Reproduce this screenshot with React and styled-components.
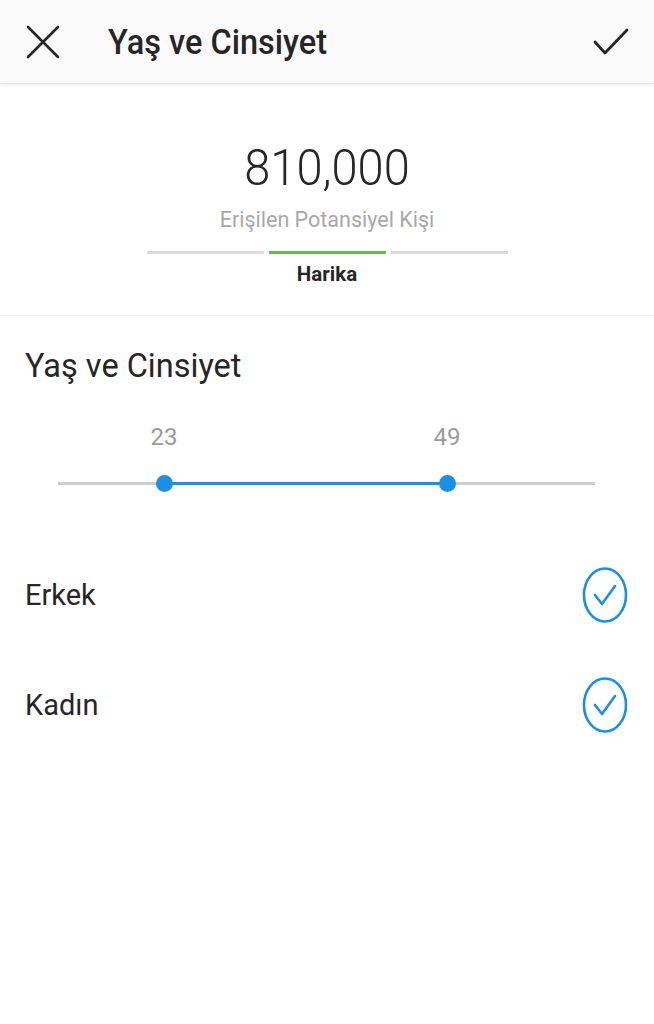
import styled, { createGlobalStyle } from "styled-components";

const GlobalStyle = createGlobalStyle`
  html, body {
    margin: 0;
    padding: 0;
    background: #ffffff;
    font-family: Roboto, "Noto Sans", sans-serif;
    color: #262626;
  }
`;

const Page = styled.div`
  width: 654px;
  height: 1024px;
  background: #ffffff;
  display: flex;
  flex-direction: column;
`;

const Header = styled.div`
  height: 84px;
  background: #fafafa;
  border-bottom: 1px solid #e6e6e6;
  box-shadow: 0 2px 2px rgba(0, 0, 0, 0.06);
  display: flex;
  align-items: center;
  padding: 0 25px 0 25px;
  box-sizing: border-box;
`;

const IconButton = styled.div`
  width: 36px;
  height: 36px;
  display: flex;
  align-items: center;
  justify-content: center;
`;

const HeaderTitle = styled.h1`
  flex: 1;
  margin: 0 0 0 47px;
  font-size: 32.5px;
  font-weight: 500;
  color: #262626;
  transform: scaleY(1.06);
`;

const Summary = styled.div`
  display: flex;
  flex-direction: column;
  align-items: center;
  padding-top: 58px;
  height: 232px;
  box-sizing: border-box;
  border-bottom: 1px solid #efefef;
`;

const BigNumber = styled.div`
  font-size: 47px;
  font-weight: 300;
  line-height: 52px;
  color: #262626;
  transform: scaleY(1.06);
`;

const Caption = styled.div`
  margin-top: 13px;
  font-size: 21.5px;
  color: #a8a8a8;
  line-height: 26px;
`;

const Meter = styled.div`
  margin-top: 18px;
  display: flex;
  gap: 5px;
`;

const MeterSegment = styled.div`
  width: 117px;
  height: 3px;
  background: ${(p) => (p.$active ? "#64b950" : "#dbdbdb")};
`;

const MeterLabel = styled.div`
  margin-top: 8px;
  font-size: 20.5px;
  font-weight: 700;
  color: #262626;
`;

const Section = styled.div`
  padding: 31px 25px 0 25px;
`;

const SectionTitle = styled.h2`
  margin: 0;
  font-size: 32.5px;
  font-weight: 400;
  color: #262626;
  transform: scaleY(1.03);
  transform-origin: left center;
`;

const SliderWrap = styled.div`
  position: relative;
  margin: 38px 0 0 33px;
  width: 537px;
  height: 76px;
`;

const SliderValue = styled.span`
  position: absolute;
  top: 0;
  transform: translateX(-50%);
  font-size: 24px;
  color: #9b9b9b;
`;

const Track = styled.div`
  position: absolute;
  left: 0;
  right: 0;
  top: 59px;
  height: 3px;
  background: #cccccc;
`;

const ActiveTrack = styled.div`
  position: absolute;
  top: 59px;
  height: 3px;
  background: #1a8fe3;
`;

const Thumb = styled.div`
  position: absolute;
  top: 52px;
  width: 17px;
  height: 17px;
  margin-left: -8.5px;
  border-radius: 50%;
  background: #1a8fe3;
`;

const OptionList = styled.div`
  margin-top: 41px;
  display: flex;
  flex-direction: column;
`;

const OptionRow = styled.div`
  height: 110px;
  display: flex;
  align-items: center;
  justify-content: space-between;
  padding: 0 26px 0 25px;
`;

const OptionLabel = styled.span`
  font-size: 29px;
  color: #262626;
  transform: scaleY(1.04);
`;

const CloseIcon = () => (
  <svg width="34" height="34" viewBox="0 0 34 34">
    <path d="M2 2 L32 32 M32 2 L2 32" stroke="#262626" strokeWidth="2.6" strokeLinecap="round" fill="none" />
  </svg>
);

const CheckIcon = () => (
  <svg width="36" height="28" viewBox="0 0 36 28">
    <path d="M2 14 L12 25 L34 2" stroke="#262626" strokeWidth="2.8" strokeLinecap="round" strokeLinejoin="round" fill="none" />
  </svg>
);

const CircleCheck = () => (
  <svg width="46" height="58" viewBox="0 0 46 58">
    <ellipse cx="23" cy="29" rx="21" ry="26.5" fill="none" stroke="#1a8fe3" strokeWidth="2.6" />
    <path d="M13 29 L20 38 L33 20" fill="none" stroke="#1a8fe3" strokeWidth="2.6" strokeLinecap="round" strokeLinejoin="round" />
  </svg>
);

const minPos = 106;
const maxPos = 389;

export default function App() {
  return (
    <>
      <GlobalStyle />
      <Page>
        <Header>
          <IconButton>
            <CloseIcon />
          </IconButton>
          <HeaderTitle>Yaş ve Cinsiyet</HeaderTitle>
          <IconButton>
            <CheckIcon />
          </IconButton>
        </Header>
        <Summary>
          <BigNumber>810,000</BigNumber>
          <Caption>Erişilen Potansiyel Kişi</Caption>
          <Meter>
            <MeterSegment />
            <MeterSegment $active />
            <MeterSegment />
          </Meter>
          <MeterLabel>Harika</MeterLabel>
        </Summary>
        <Section>
          <SectionTitle>Yaş ve Cinsiyet</SectionTitle>
          <SliderWrap>
            <SliderValue style={{ left: minPos }}>23</SliderValue>
            <SliderValue style={{ left: maxPos }}>49</SliderValue>
            <Track />
            <ActiveTrack style={{ left: minPos, width: maxPos - minPos }} />
            <Thumb style={{ left: minPos }} />
            <Thumb style={{ left: maxPos }} />
          </SliderWrap>
        </Section>
        <OptionList>
          <OptionRow>
            <OptionLabel>Erkek</OptionLabel>
            <CircleCheck />
          </OptionRow>
          <OptionRow>
            <OptionLabel>Kadın</OptionLabel>
            <CircleCheck />
          </OptionRow>
        </OptionList>
      </Page>
    </>
  );
}
